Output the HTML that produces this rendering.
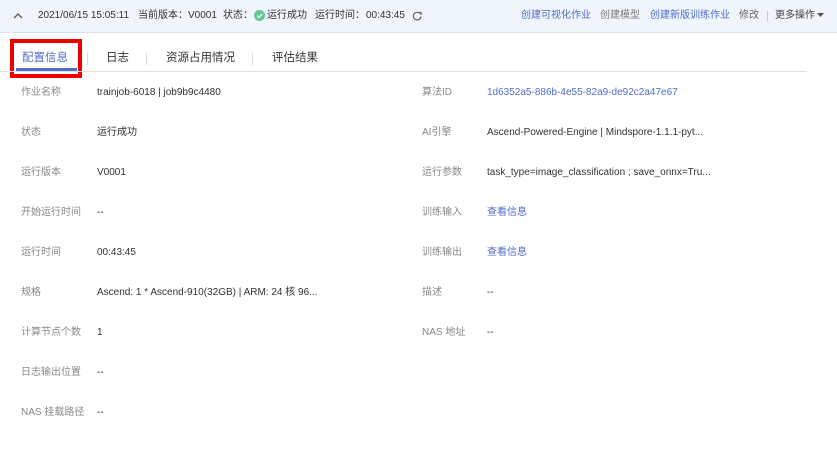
<!DOCTYPE html>
<html><head><meta charset="utf-8"><style>
*{margin:0;padding:0;box-sizing:border-box}
body{width:837px;height:449px;background:#fff;font-family:"Liberation Sans","Noto Sans CJK SC",sans-serif;font-size:10px;color:#333;position:relative;overflow:hidden}
.hdr{position:absolute;left:0;top:0;width:837px;height:33px;background:#f0f4fb;border-bottom:1px solid #dde1e8}
.a{position:absolute;top:10px;white-space:nowrap;line-height:12px}
.tabs{position:absolute;left:0;top:71px;width:807px;border-top:1px solid #e0e0e0}
.tab{position:absolute;top:51px;font-size:11.5px;line-height:14px;color:#333}
.sep{position:absolute;top:53px;width:1px;height:12px;background:#ddd}
.l{position:absolute;color:#888;white-space:nowrap;line-height:12px}
.v{position:absolute;color:#333;white-space:nowrap;line-height:12px}
.lk{color:#526ecc}
.r{margin-top:2px}
</style></head><body>
<div class="hdr">
<svg style="position:absolute;left:13px;top:12px" width="10" height="8"><path d="M1 6 L5 2 L9 6" stroke="#555" stroke-width="1.3" fill="none"/></svg>
<span class="a" style="left:38px">2021/06/15 15:05:11</span>
<span class="a" style="left:138px">当前版本：V0001</span>
<span class="a" style="left:223px">状态：</span>
<svg style="position:absolute;left:254px;top:10px" width="11" height="11"><circle cx="5.5" cy="5.5" r="5.5" fill="#5fc893"/><path d="M3 5.6 L5 7.5 L8.2 3.8" stroke="#fff" stroke-width="1.3" fill="none"/></svg>
<span class="a" style="left:267px">运行成功</span>
<span class="a" style="left:315px">运行时间：</span>
<span class="a" style="left:366px">00:43:45</span>
<svg style="position:absolute;left:412px;top:11px" width="10" height="10"><path d="M8 2.5 A3.8 3.8 0 1 0 9 5.5" stroke="#666" stroke-width="1.2" fill="none"/><path d="M6.5 1.5 L9 1.5 L9 4" stroke="#666" stroke-width="1.2" fill="none"/></svg>
<span class="a lk" style="left:521px">创建可视化作业</span>
<span class="a" style="left:600px;color:#777">创建模型</span>
<span class="a lk" style="left:650px">创建新版训练作业</span>
<span class="a" style="left:739px;color:#666">修改</span>
<span style="position:absolute;left:767px;top:11px;width:1px;height:11px;background:#ccc"></span>
<span class="a" style="left:775px;color:#444">更多操作</span>
<svg style="position:absolute;left:817px;top:13px" width="7" height="5"><path d="M0 0 L7 0 L3.5 4z" fill="#555"/></svg>
</div>
<div class="tab" style="left:22px;color:#526ecc">配置信息</div>
<div style="position:absolute;left:16px;top:68px;width:61px;height:3px;background:#526ecc"></div>
<div style="position:absolute;left:10px;top:39px;width:72px;height:39px;border:4px solid #e00"></div>
<div class="sep" style="left:87px"></div>
<div class="tab" style="left:106px">日志</div>
<div class="sep" style="left:146px"></div>
<div class="tab" style="left:166px">资源占用情况</div>
<div class="sep" style="left:252px"></div>
<div class="tab" style="left:272px">评估结果</div>
<div class="tabs"></div>

<div class="l" style="left:21px;top:87px">作业名称</div><div class="v" style="left:97px;top:87px">trainjob-6018 | job9b9c4480</div>
<div class="l" style="left:21px;top:127px">状态</div><div class="v" style="left:97px;top:127px">运行成功</div>
<div class="l" style="left:21px;top:167px">运行版本</div><div class="v" style="left:97px;top:167px">V0001</div>
<div class="l" style="left:21px;top:207px">开始运行时间</div><div class="v" style="left:97px;top:207px">--</div>
<div class="l" style="left:21px;top:247px">运行时间</div><div class="v" style="left:97px;top:247px">00:43:45</div>
<div class="l" style="left:21px;top:287px">规格</div><div class="v" style="left:97px;top:287px">Ascend: 1 * Ascend-910(32GB) | ARM: 24 核 96...</div>
<div class="l" style="left:21px;top:327px">计算节点个数</div><div class="v" style="left:97px;top:327px">1</div>
<div class="l" style="left:21px;top:367px">日志输出位置</div><div class="v" style="left:97px;top:367px">--</div>
<div class="l" style="left:21px;top:407px">NAS 挂载路径</div><div class="v" style="left:97px;top:407px">--</div>

<div class="l" style="left:422px;top:87px">算法ID</div><div class="v lk" style="left:487px;top:87px">1d6352a5-886b-4e55-82a9-de92c2a47e67</div>
<div class="l" style="left:422px;top:127px">AI引擎</div><div class="v" style="left:487px;top:127px">Ascend-Powered-Engine | Mindspore-1.1.1-pyt...</div>
<div class="l" style="left:422px;top:167px">运行参数</div><div class="v" style="left:487px;top:167px">task_type=image_classification ; save_onnx=Tru...</div>
<div class="l" style="left:422px;top:207px">训练输入</div><div class="v lk" style="left:487px;top:207px">查看信息</div>
<div class="l" style="left:422px;top:247px">训练输出</div><div class="v lk" style="left:487px;top:247px">查看信息</div>
<div class="l" style="left:422px;top:287px">描述</div><div class="v" style="left:487px;top:287px">--</div>
<div class="l" style="left:422px;top:327px">NAS 地址</div><div class="v" style="left:487px;top:327px">--</div>
</body></html>
